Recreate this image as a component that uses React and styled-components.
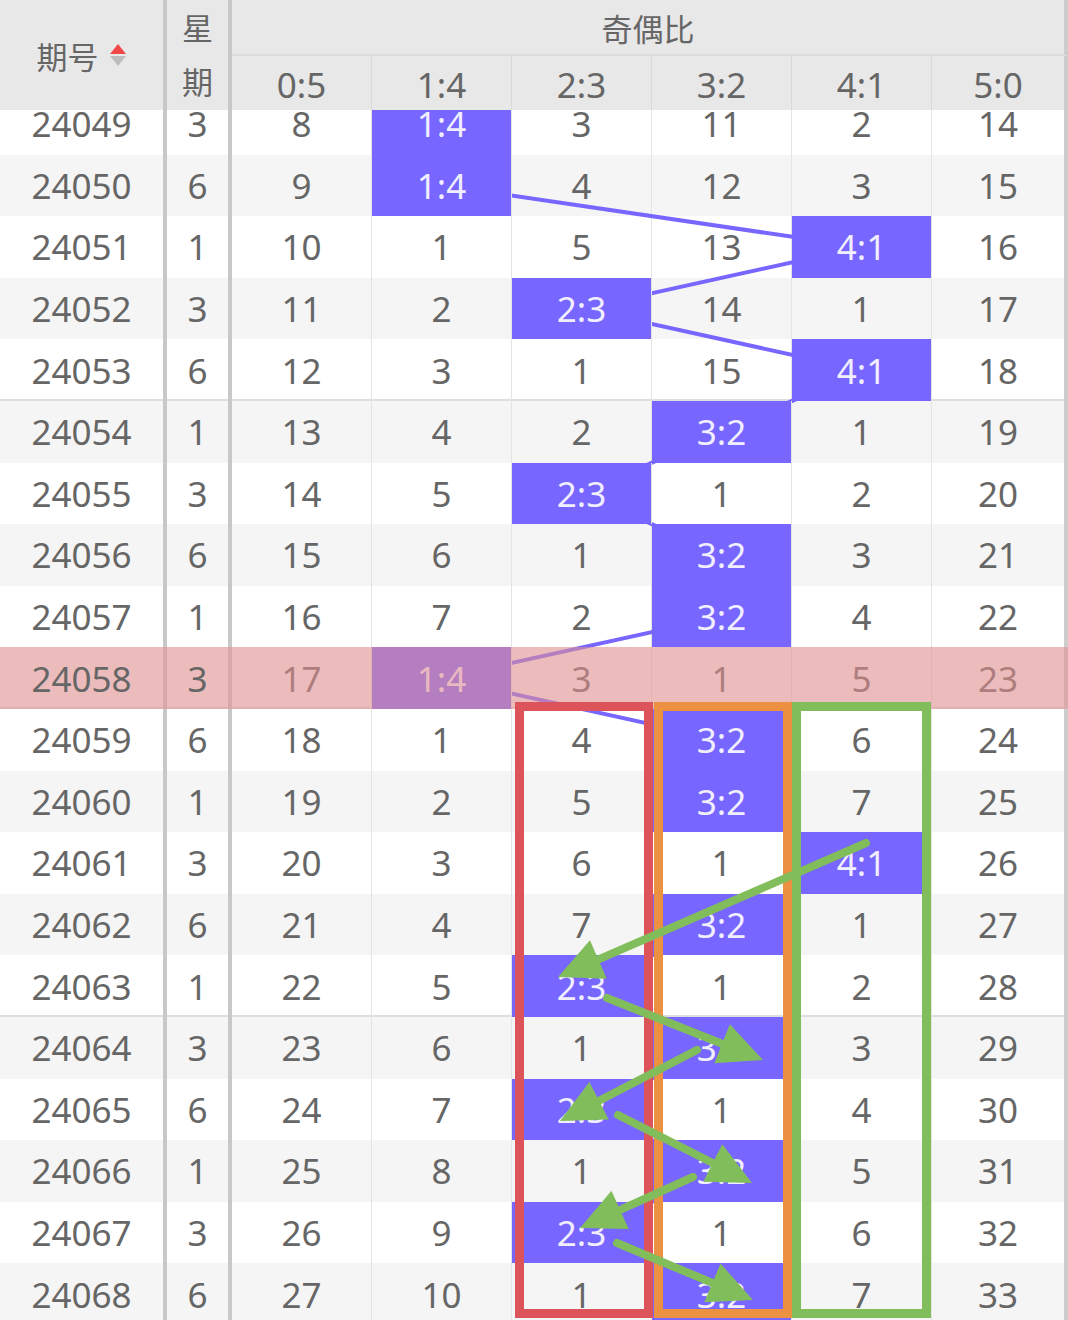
import React from 'react';
import styled, { createGlobalStyle, css } from 'styled-components';

const GlobalStyle = createGlobalStyle`
  html, body {
    margin: 0;
    padding: 0;
    background: #fff;
  }
  body {
    font-family: "Noto Sans", "Noto Sans CJK SC", sans-serif;
    overflow: hidden;
  }
`;

const ROW_H = 61.6;
const GRID = '167px 65px repeat(5, 140px) 136px';
const RATIOS = ['0:5', '1:4', '2:3', '3:2', '4:1', '5:0'];

// [期号, 星期, hit column, values]
const rows = [
  ['24049', 3, 1, [8, 0, 3, 11, 2, 14]],
  ['24050', 6, 1, [9, 0, 4, 12, 3, 15]],
  ['24051', 1, 4, [10, 1, 5, 13, 0, 16]],
  ['24052', 3, 2, [11, 2, 0, 14, 1, 17]],
  ['24053', 6, 4, [12, 3, 1, 15, 0, 18]],
  ['24054', 1, 3, [13, 4, 2, 0, 1, 19]],
  ['24055', 3, 2, [14, 5, 0, 1, 2, 20]],
  ['24056', 6, 3, [15, 6, 1, 0, 3, 21]],
  ['24057', 1, 3, [16, 7, 2, 0, 4, 22]],
  ['24058', 3, 1, [17, 0, 3, 1, 5, 23]],
  ['24059', 6, 3, [18, 1, 4, 0, 6, 24]],
  ['24060', 1, 3, [19, 2, 5, 0, 7, 25]],
  ['24061', 3, 4, [20, 3, 6, 1, 0, 26]],
  ['24062', 6, 3, [21, 4, 7, 0, 1, 27]],
  ['24063', 1, 2, [22, 5, 0, 1, 2, 28]],
  ['24064', 3, 3, [23, 6, 1, 0, 3, 29]],
  ['24065', 6, 2, [24, 7, 0, 1, 4, 30]],
  ['24066', 1, 3, [25, 8, 1, 0, 5, 31]],
  ['24067', 3, 2, [26, 9, 0, 1, 6, 32]],
  ['24068', 6, 3, [27, 10, 1, 0, 7, 33]],
];

const HIGHLIGHT = '24058';

const Page = styled.div`
  position: relative;
  width: 1068px;
  height: 1320px;
  overflow: hidden;
  color: #666;
`;

const Header = styled.div`
  position: relative;
  z-index: 10;
  display: grid;
  grid-template-columns: ${GRID};
  grid-template-rows: 56px 54px;
  background: #e8e8e8;
  margin-bottom: -17px;
`;

const HeadCell = styled.div`
  display: flex;
  align-items: center;
  justify-content: center;
  box-sizing: border-box;
  font-size: ${(p) => (p.$cjk ? '31px' : '35px')};
  border-right: ${(p) =>
    p.$thick ? '4px solid #c8c8c8' : p.$edge ? '4px solid #cdcdcd' : '1px solid #dadada'};
`;

const IssueHead = styled(HeadCell)`
  grid-row: 1 / span 2;
  grid-column: 1;
  gap: 10px;
`;

const WeekHead = styled(HeadCell)`
  grid-row: 1 / span 2;
  grid-column: 2;
  flex-direction: column;
  & > span {
    height: 54px;
    line-height: 54px;
  }
`;

const GroupHead = styled(HeadCell)`
  grid-column: 3 / span 6;
  grid-row: 1;
  border-bottom: 2px solid #dcdcdc;
  font-size: 31px;
`;

const SubHead = styled(HeadCell)`
  grid-row: 2;
  padding-top: 2px;
`;

const Body = styled.div`
  position: relative;
`;

const Row = styled.div`
  position: relative;
  display: grid;
  grid-template-columns: ${GRID};
  height: ${ROW_H}px;
  background: ${(p) => (p.$alt ? '#f5f5f5' : '#fff')};
  ${(p) =>
    p.$sep &&
    css`
      box-shadow: inset 0 -2px 0 #dedede;
    `}
  ${(p) =>
    p.$marked &&
    css`
      &::after {
        content: '';
        position: absolute;
        inset: 0;
        z-index: 3;
        background: rgba(228, 144, 144, 0.57);
      }
    `}
`;

const Cell = styled.div`
  display: flex;
  align-items: center;
  justify-content: center;
  box-sizing: border-box;
  font-size: 35px;
  border-right: ${(p) =>
    p.$thick ? '4px solid #c8c8c8' : p.$edge ? '4px solid #cdcdcd' : '1px solid #e4e4e4'};
`;

const FixedText = styled.span`
  position: relative;
  z-index: 4;
`;

const HitCell = styled(Cell)`
  position: relative;
  z-index: 2;
  background: #7766ff;
  color: #f1efff;
`;

const Layer = styled.svg`
  position: absolute;
  left: 0;
  top: 0;
  z-index: ${(p) => p.$z};
  pointer-events: none;
`;

const SortIcon = () => (
  <svg width="18" height="24" viewBox="0 0 18 24">
    <polygon points="9,1 17,11 1,11" fill="#f04848" />
    <polygon points="1,13 17,13 9,23" fill="#bdbdbd" />
  </svg>
);

const colCenter = (k) => 232 + 140 * k + 70;

const TrendLine = () => {
  const pts = rows
    .map(([, , hit], i) => `${colCenter(hit)},${ROW_H * i + ROW_H / 2}`)
    .join(' ');
  return (
    <Layer $z={1} width="1068" height={ROW_H * rows.length}>
      <polyline points={pts} fill="none" stroke="#7766ff" strokeWidth="4" />
    </Layer>
  );
};

const arrows = [
  [[866, 843], [558, 977]],
  [[607, 998], [763, 1060]],
  [[697, 1050], [560, 1121]],
  [[618, 1115], [752, 1183]],
  [[693, 1177], [580, 1228]],
  [[617, 1243], [753, 1300]],
];

const Arrow = ({ from, to }) => {
  const [x1, y1] = from;
  const [x2, y2] = to;
  const len = Math.hypot(x2 - x1, y2 - y1);
  const ux = (x2 - x1) / len;
  const uy = (y2 - y1) / len;
  const L = 44;
  const W = 21;
  const bx = x2 - ux * L;
  const by = y2 - uy * L;
  const nx = -uy;
  const ny = ux;
  return (
    <g fill="#82bd5b" stroke="#82bd5b">
      <line x1={x1} y1={y1} x2={bx + ux * 6} y2={by + uy * 6} strokeWidth="8" strokeLinecap="round" />
      <polygon
        stroke="none"
        points={`${x2},${y2} ${bx + nx * W},${by + ny * W} ${bx - nx * W},${by - ny * W}`}
      />
    </g>
  );
};

const Annotations = () => (
  <Layer $z={8} width="1068" height="1320">
    <g fill="none" strokeWidth="9">
      <rect x="519.5" y="706.5" width="129" height="607" stroke="#dc545a" />
      <rect x="658.5" y="706.5" width="129" height="607" stroke="#ec9042" />
      <rect x="796.5" y="706.5" width="130" height="607" stroke="#82bd5b" />
    </g>
    {arrows.map(([from, to], i) => (
      <Arrow key={i} from={from} to={to} />
    ))}
  </Layer>
);

export default function App() {
  return (
    <>
      <GlobalStyle />
      <Page>
        <Header>
          <IssueHead $thick $cjk>
            <span>期号</span>
            <SortIcon />
          </IssueHead>
          <WeekHead $thick $cjk>
            <span>星</span>
            <span>期</span>
          </WeekHead>
          <GroupHead $edge>奇偶比</GroupHead>
          {RATIOS.map((r, k) => (
            <SubHead key={r} $edge={k === 5}>
              {r}
            </SubHead>
          ))}
        </Header>
        <Body>
          {rows.map(([issue, week, hit, values], i) => (
            <Row
              key={issue}
              $alt={i % 2 === 1}
              $sep={issue.endsWith('3') || issue.endsWith('8')}
              $marked={issue === HIGHLIGHT}
            >
              <Cell $thick>
                <FixedText>{issue}</FixedText>
              </Cell>
              <Cell $thick>
                <FixedText>{week}</FixedText>
              </Cell>
              {values.map((v, k) =>
                k === hit ? (
                  <HitCell key={k}>{RATIOS[k]}</HitCell>
                ) : (
                  <Cell key={k} $edge={k === 5}>
                    {v}
                  </Cell>
                )
              )}
            </Row>
          ))}
          <TrendLine />
        </Body>
        <Annotations />
      </Page>
    </>
  );
}
